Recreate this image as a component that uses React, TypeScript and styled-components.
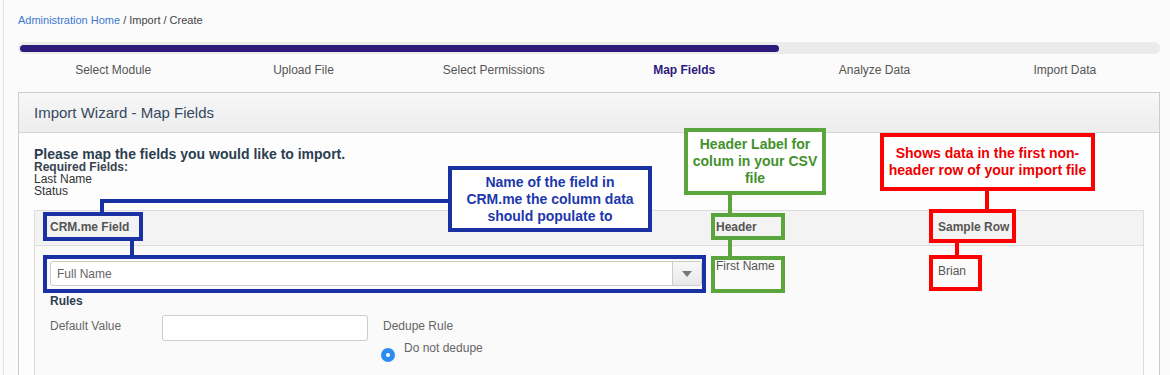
import React from 'react';
import styled, { createGlobalStyle } from 'styled-components';

const GlobalStyle = createGlobalStyle`
  html, body {
    margin: 0;
    padding: 0;
    background: #fbfbfb;
  }
  body {
    font-family: "Liberation Sans", Arial, sans-serif;
    color: #333;
  }
`;

const steps = ['Select Module', 'Upload File', 'Select Permissions', 'Map Fields', 'Analyze Data', 'Import Data'];
const currentStep = 3;

const BLUE = '#1a31a3';
const GREEN = '#5aa63c';
const RED = '#ff0000';

export default function App() {
	const progress = ((currentStep + 1) / steps.length) * 100;

	return (
		<>
			<GlobalStyle />
			<Root>
				<Frame>
					<Breadcrumb>
						<a>Administration Home</a> / Import / Create
					</Breadcrumb>

					<Track>
						<Fill style={{ width: `${progress}%` }} />
					</Track>

					<Steps>
						{steps.map((s, i) => (
							<Step key={s} $active={i === currentStep}>
								{s}
							</Step>
						))}
					</Steps>

					<Panel>
						<PanelHeader>Import Wizard - Map Fields</PanelHeader>
						<PanelBody>
							<Intro>Please map the fields you would like to import.</Intro>
							<Required>
								<strong>Required Fields:</strong>
								<div>Last Name</div>
								<div>Status</div>
							</Required>

							<Table>
								<HeadRow>
									<Cell $pl={15}>CRM.me Field</Cell>
									<Cell $pl={5}>Header</Cell>
									<Cell $pl={5}>Sample Row</Cell>
								</HeadRow>
								<BodyRow>
									<Cell $pl={15} $pt={15}>
										<Select>
											<SelectValue>Full Name</SelectValue>
											<SelectArrow />
										</Select>
										<RulesTitle>Rules</RulesTitle>
										<RulesGrid>
											<FieldLabel>Default Value</FieldLabel>
											<TextInput />
											<DedupeCol>
												<FieldLabel>Dedupe Rule</FieldLabel>
												<RadioRow>
													<Radio />
													<span>Do not dedupe</span>
												</RadioRow>
											</DedupeCol>
										</RulesGrid>
									</Cell>
									<Cell $pl={5} $pt={13}>
										First Name
									</Cell>
									<Cell $pl={5} $pt={18}>
										Brian
									</Cell>
								</BodyRow>
							</Table>
						</PanelBody>
					</Panel>
				</Frame>

				{/* annotations drawn over the screenshot */}
				<Callout $c={BLUE} $t="#1d37ad" $x={448} $y={166} $w={204} $h={66}>
					Name of the field in
					<br />
					CRM.me the column data
					<br />
					should populate to
				</Callout>
				<Line $c={BLUE} $x={100} $y={199} $w={348} $h={4} />
				<Line $c={BLUE} $x={100} $y={199} $w={4} $h={14} />
				<Marker $c={BLUE} $x={43} $y={212} $w={100} $h={29} />
				<Line $c={BLUE} $x={130} $y={241} $w={4} $h={14} />
				<Marker $c={BLUE} $x={43} $y={255} $w={663} $h={38} />

				<Callout $c={GREEN} $t="#43912c" $x={684} $y={128} $w={142} $h={67}>
					Header Label for
					<br />
					colum in your CSV
					<br />
					file
				</Callout>
				<Line $c={GREEN} $x={728} $y={195} $w={4} $h={18} />
				<Marker $c={GREEN} $x={711} $y={213} $w={74} $h={27} />
				<Line $c={GREEN} $x={728} $y={240} $w={4} $h={16} />
				<Marker $c={GREEN} $x={711} $y={256} $w={74} $h={37} />

				<Callout $c={RED} $t="#ee0000" $x={880} $y={133} $w={215} $h={58}>
					Shows data in the first non-
					<br />
					header row of your import file
				</Callout>
				<Line $c={RED} $x={985} $y={191} $w={4} $h={18} />
				<Marker $c={RED} $x={929} $y={209} $w={87} $h={34} />
				<Line $c={RED} $x={955} $y={243} $w={4} $h={12} />
				<Marker $c={RED} $x={929} $y={255} $w={53} $h={36} />
			</Root>
		</>
	);
}

const Root = styled.div`
	position: relative;
	width: 1170px;
	height: 375px;
	overflow: hidden;
`;

const Frame = styled.div`
	margin-left: 3px;
	border-left: 1px solid #e4e4e4;
	padding: 13px 10px 0 14px;
	min-height: 375px;
	box-sizing: border-box;
`;

const Breadcrumb = styled.div`
	font-size: 11px;
	line-height: 14px;
	color: #444;

	a {
		color: #3b78d0;
		cursor: pointer;
	}
`;

const Track = styled.div`
	margin-top: 15px;
	height: 12px;
	box-sizing: border-box;
	padding: 3px 2px 2px;
	background: #ebebeb;
	border-radius: 6px;
`;

const Fill = styled.div`
	height: 7px;
	border-radius: 4px;
	background: #2e1a7b;
`;

const Steps = styled.div`
	display: grid;
	grid-template-columns: repeat(6, 1fr);
	margin-top: 9px;
	font-size: 12px;
	line-height: 14px;
	text-align: center;
`;

const Step = styled.div<{ $active?: boolean }>`
	color: ${(p) => (p.$active ? '#2e1a7b' : '#555')};
	font-weight: ${(p) => (p.$active ? 'bold' : 'normal')};
`;

const Panel = styled.div`
	margin-top: 15px;
	border: 1px solid #ccc;
	background: #fdfdfd;
	height: 400px;
`;

const PanelHeader = styled.div`
	height: 39px;
	border-bottom: 1px solid #d5d5d5;
	background: linear-gradient(#f7f7f7, #ededed);
	padding-left: 15px;
	display: flex;
	align-items: center;
	font-size: 15px;
	color: #34495e;
`;

const PanelBody = styled.div`
	padding: 14px 15px 0;
`;

const Intro = styled.div`
	font-size: 14px;
	line-height: 14px;
	font-weight: bold;
	color: #2c3e50;
`;

const Required = styled.div`
	font-size: 12px;
	line-height: 12px;
	color: #333;

	strong {
		display: block;
		color: #3a4450;
	}
`;

const Table = styled.div`
	margin-top: 13px;
	border: 1px solid #ddd;
	background: #fafafa;
	height: 300px;
`;

const HeadRow = styled.div`
	display: grid;
	grid-template-columns: 676px 222px 1fr;
	height: 35px;
	box-sizing: border-box;
	padding-top: 9px;
	background: #f3f3f3;
	border-bottom: 1px solid #ddd;
	font-size: 12px;
	line-height: 14px;
	font-weight: bold;
	color: #555;
`;

const BodyRow = styled.div`
	display: grid;
	grid-template-columns: 676px 222px 1fr;
	font-size: 12px;
	line-height: 14px;
	color: #555;
`;

const Cell = styled.div<{ $pl: number; $pt?: number }>`
	padding-left: ${(p) => p.$pl}px;
	padding-top: ${(p) => p.$pt ?? 0}px;
`;

const Select = styled.div`
	width: 652px;
	height: 25px;
	box-sizing: border-box;
	border: 1px solid #ccc;
	border-radius: 3px;
	background: #fff;
	display: flex;
	align-items: stretch;
`;

const SelectValue = styled.div`
	flex: 1;
	padding-left: 6px;
	display: flex;
	align-items: center;
	font-size: 12px;
	color: #666;
`;

const SelectArrow = styled.div`
	width: 28px;
	border-left: 1px solid #ccc;
	border-radius: 0 2px 2px 0;
	background: linear-gradient(#f8f8f8, #e8e8e8);
	display: flex;
	align-items: center;
	justify-content: center;

	&::after {
		content: '';
		border-left: 5px solid transparent;
		border-right: 5px solid transparent;
		border-top: 6px solid #777;
	}
`;

const RulesTitle = styled.div`
	margin-top: 8px;
	font-weight: bold;
	color: #2c3e50;
`;

const RulesGrid = styled.div`
	margin-top: 7px;
	display: grid;
	grid-template-columns: 112px 206px 1fr;
	align-items: start;
`;

const FieldLabel = styled.div`
	padding-top: 4px;
	color: #666;
`;

const TextInput = styled.div`
	height: 26px;
	box-sizing: border-box;
	border: 1px solid #ccc;
	border-radius: 3px;
	background: #fff;
`;

const DedupeCol = styled.div`
	padding-left: 13px;

	${FieldLabel} {
		padding-left: 2px;
	}
`;

const RadioRow = styled.div`
	margin-top: 8px;
	display: flex;
	align-items: flex-start;
	gap: 9px;
	color: #666;
`;

const Radio = styled.span`
	margin-top: 7px;
	width: 14px;
	height: 14px;
	border-radius: 50%;
	background: #2d8cf0;
	display: flex;
	align-items: center;
	justify-content: center;

	&::after {
		content: '';
		width: 4px;
		height: 4px;
		border-radius: 50%;
		background: #fff;
	}
`;

type Box = { $c: string; $x: number; $y: number; $w: number; $h: number };

const Callout = styled.div<Box & { $t: string }>`
	position: absolute;
	left: ${(p) => p.$x}px;
	top: ${(p) => p.$y}px;
	width: ${(p) => p.$w}px;
	height: ${(p) => p.$h}px;
	box-sizing: border-box;
	border: 4px solid ${(p) => p.$c};
	background: #fff;
	color: ${(p) => p.$t};
	font-size: 14px;
	line-height: 17px;
	font-weight: bold;
	text-align: center;
	display: flex;
	align-items: center;
	justify-content: center;
	white-space: nowrap;
`;

const Marker = styled.div<Box>`
	position: absolute;
	left: ${(p) => p.$x}px;
	top: ${(p) => p.$y}px;
	width: ${(p) => p.$w}px;
	height: ${(p) => p.$h}px;
	box-sizing: border-box;
	border: 4px solid ${(p) => p.$c};
`;

const Line = styled.div<Box>`
	position: absolute;
	left: ${(p) => p.$x}px;
	top: ${(p) => p.$y}px;
	width: ${(p) => p.$w}px;
	height: ${(p) => p.$h}px;
	background: ${(p) => p.$c};
`;
